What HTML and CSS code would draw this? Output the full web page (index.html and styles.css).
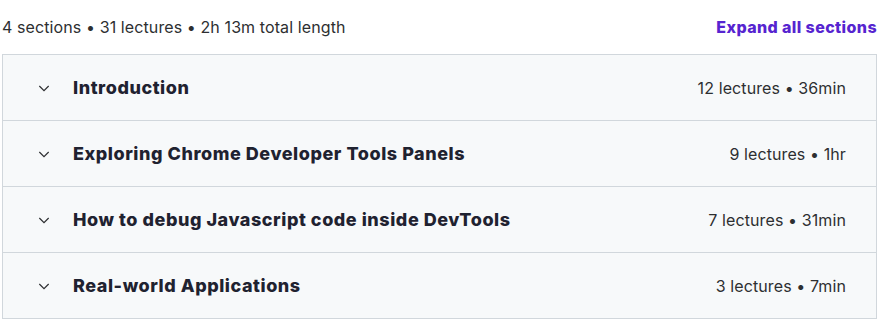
FILE: index.html
```html
<!DOCTYPE html>
<html lang="en">
<head>
  <meta charset="UTF-8" />
  <title>Course content</title>
  <link rel="stylesheet" href="styles.css">
</head>
<body>
  <div class="curriculum">
    <div class="curriculum-header">
      <span class="summary">4 sections • 31 lectures • 2h 13m total length</span>
      <button class="expand-all">Expand all sections</button>
    </div>

    <div class="sections">
      <div class="section">
        <svg class="chevron" viewBox="0 0 24 24"><path d="M5 9l7 7 7-7"/></svg>
        <span class="section-title">Introduction</span>
        <span class="section-meta">12 lectures • 36min</span>
      </div>
      <div class="section">
        <svg class="chevron" viewBox="0 0 24 24"><path d="M5 9l7 7 7-7"/></svg>
        <span class="section-title">Exploring Chrome Developer Tools Panels</span>
        <span class="section-meta">9 lectures • 1hr</span>
      </div>
      <div class="section">
        <svg class="chevron" viewBox="0 0 24 24"><path d="M5 9l7 7 7-7"/></svg>
        <span class="section-title">How to debug Javascript code inside DevTools</span>
        <span class="section-meta">7 lectures • 31min</span>
      </div>
      <div class="section">
        <svg class="chevron" viewBox="0 0 24 24"><path d="M5 9l7 7 7-7"/></svg>
        <span class="section-title">Real-world Applications</span>
        <span class="section-meta">3 lectures • 7min</span>
      </div>
    </div>
  </div>
</body>
</html>
```

FILE: styles.css
```css
body {
  margin: 0;
  background: #fff;
  font-family: "Inter", "Noto Sans", sans-serif;
  color: #2d2f31;
}

.curriculum {
  width: 875px;
  margin-left: 2px;
}

.curriculum-header {
  display: flex;
  justify-content: space-between;
  align-items: center;
  height: 54px;
}

.summary {
  font-size: 16px;
  letter-spacing: 0.1px;
  color: #2d2f31;
}

.expand-all {
  background: none;
  border: none;
  padding: 0;
  font-family: inherit;
  font-size: 16px;
  font-weight: 800;
  letter-spacing: 0.4px;
  color: #5624d0;
  cursor: pointer;
}

.sections {
  border: 1px solid #d1d7dc;
  border-bottom: none;
}

.section {
  display: flex;
  align-items: center;
  height: 65px;
  padding: 0 30px 0 33px;
  background: #f7f9fa;
  border-bottom: 1px solid #d1d7dc;
}

.chevron {
  width: 16px;
  height: 16px;
  fill: none;
  stroke: #2d2f31;
  stroke-width: 1.8;
  margin-right: 21px;
}

.section-title {
  flex: 1;
  font-size: 18px;
  font-weight: 800;
  letter-spacing: 0.55px;
  color: #1f2230;
}

.section-meta {
  font-size: 16px;
  letter-spacing: 0.1px;
}
```
